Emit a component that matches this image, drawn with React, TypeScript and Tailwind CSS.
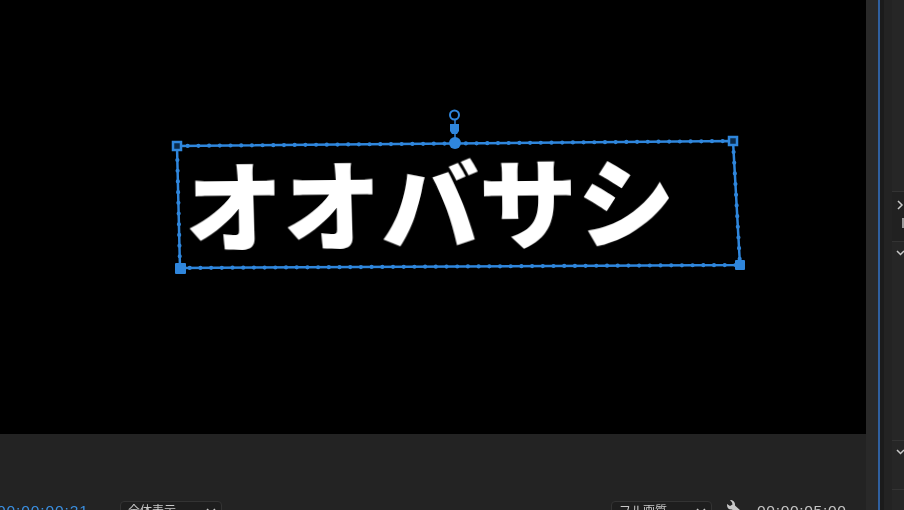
const jp = { fontFamily: '"Noto Sans CJK JP", sans-serif' };
const mono = { fontFamily: '"Liberation Sans", sans-serif' };

function SelectionBox() {
  const outline = '177,146 733,141 740,265 180,268 177,146';
  return (
    <svg className="absolute left-0 top-0 blur-[0.3px]" width="866" height="434" fill="none">
      <polyline points={outline} stroke="#2f86dc" strokeWidth="2.5" />
      <polyline points={outline} stroke="#2f86dc" strokeWidth="4.2" strokeLinecap="round" strokeDasharray="0 10.7" />
      <line x1="455" y1="120" x2="455" y2="143" stroke="#2f86dc" strokeWidth="1.5" />
      <circle cx="454.5" cy="115" r="4.5" stroke="#2f86dc" strokeWidth="2" fill="#000" />
      <path d="M450 124h9v7l-2 3h-5l-2-3z" fill="#2f86dc" />
      <circle cx="455" cy="143" r="6" fill="#2f86dc" />
      <rect x="173" y="142" width="8" height="8" stroke="#2f86dc" strokeWidth="2.5" fill="#0a2a4a" />
      <rect x="729" y="137" width="8" height="8" stroke="#2f86dc" strokeWidth="2.5" fill="#0a2a4a" />
      <rect x="735" y="260" width="10" height="10" rx="1" fill="#2f86dc" />
      <rect x="175" y="263" width="11" height="11" rx="1" fill="#2f86dc" />
    </svg>
  );
}

function Dropdown({ label, width }: { label: string; width: string }) {
  return (
    <div className={`flex h-[24px] items-start justify-between rounded-sm border border-[#333333] bg-[#1e1e1e] pl-[7px] pr-[5px] ${width}`}>
      <span className="mt-[1px] text-[12px] leading-[14px] text-[#c8c8c8]" style={jp}>{label}</span>
      <svg className="mt-[6px]" width="10" height="7" viewBox="0 0 10 7" fill="none" stroke="#c4c4c4" strokeWidth="1.5">
        <path d="M1 1l4 4 4-4" />
      </svg>
    </div>
  );
}

function Wrench() {
  return (
    <svg width="16" height="22" viewBox="0 0 16 22" fill="#c8c8c8">
      <path d="M3 0 C6 0 8 2 8 4.5 L8 5.5 L14 11 C15.5 12.5 15 14 14 15 C13 16 11.5 16 10.5 15 L5 9.5 C2.5 10 0 8.5 0 5 L0 4 L3 6 L5.5 4.5 L5 2.5 Z" />
    </svg>
  );
}

function Chevron({ className, d }: { className: string; d: string }) {
  return (
    <svg className={className} width="8" height="10" viewBox="0 0 8 10" fill="none" stroke="#c8c8c8" strokeWidth="1.5">
      <path d={d} />
    </svg>
  );
}

function SidePanel() {
  return (
    <div className="flex w-[12px] shrink-0 flex-col bg-[#262626]">
      <div className="h-[191px] shrink-0" />
      <div className="h-[51px] shrink-0 border-y border-[#333333] bg-[#212121] pt-[8px]">
        <Chevron className="ml-[4px]" d="M2 1l4 4-4 4" />
        <div className="ml-[10px] mt-[8px] h-[10px] w-[2px] bg-[#9a9a9a]" />
      </div>
      <div className="h-[198px] shrink-0 pt-[7px]">
        <Chevron className="ml-[4px]" d="M1 2l3.5 3.5L8 2" />
      </div>
      <div className="h-[50px] shrink-0 border-y border-[#333333] pt-[7px]">
        <Chevron className="ml-[4px]" d="M1 2l3.5 3.5L8 2" />
      </div>
    </div>
  );
}

export default function App() {
  return (
    <div className="flex h-[510px] w-[904px] overflow-hidden bg-[#232323]">
      <div className="flex w-[866px] shrink-0 flex-col">
        <div className="relative h-[434px] shrink-0 overflow-hidden bg-black">
          <div
            className="absolute left-[185px] top-[140px] -rotate-[0.6deg] whitespace-nowrap text-[98px] font-black leading-[118px] text-white blur-[0.3px]"
            style={jp}
          >
            オオバサシ
          </div>
          <SelectionBox />
        </div>
        <div className="flex flex-1 items-start pt-[67px] blur-[0.5px]">
          <span className="ml-[-3px] mt-[1px] w-[123px] shrink-0 whitespace-nowrap text-[15.5px] leading-[18px] tracking-[0.9px] text-[#3b8fe0]" style={mono}>
            00:00:00:21
          </span>
          <Dropdown label="全体表示" width="w-[102px]" />
          <div className="ml-[389px]">
            <Dropdown label="フル画質" width="w-[101px]" />
          </div>
          <div className="ml-[15px] mt-[-1px]"><Wrench /></div>
          <span className="ml-[14px] mt-[1px] whitespace-nowrap text-[15.5px] leading-[18px] tracking-[0.7px] text-[#c4c4c4]" style={mono}>
            00:00:05:00
          </span>
        </div>
      </div>
      <div className="w-[12px] shrink-0 bg-[#292929]" />
      <div className="w-[2px] shrink-0 bg-[#2f5f9e]" />
      <div className="w-[4px] shrink-0 bg-[#1b1b1b]" />
      <div className="w-[8px] shrink-0 bg-[#232323]" />
      <SidePanel />
    </div>
  );
}
